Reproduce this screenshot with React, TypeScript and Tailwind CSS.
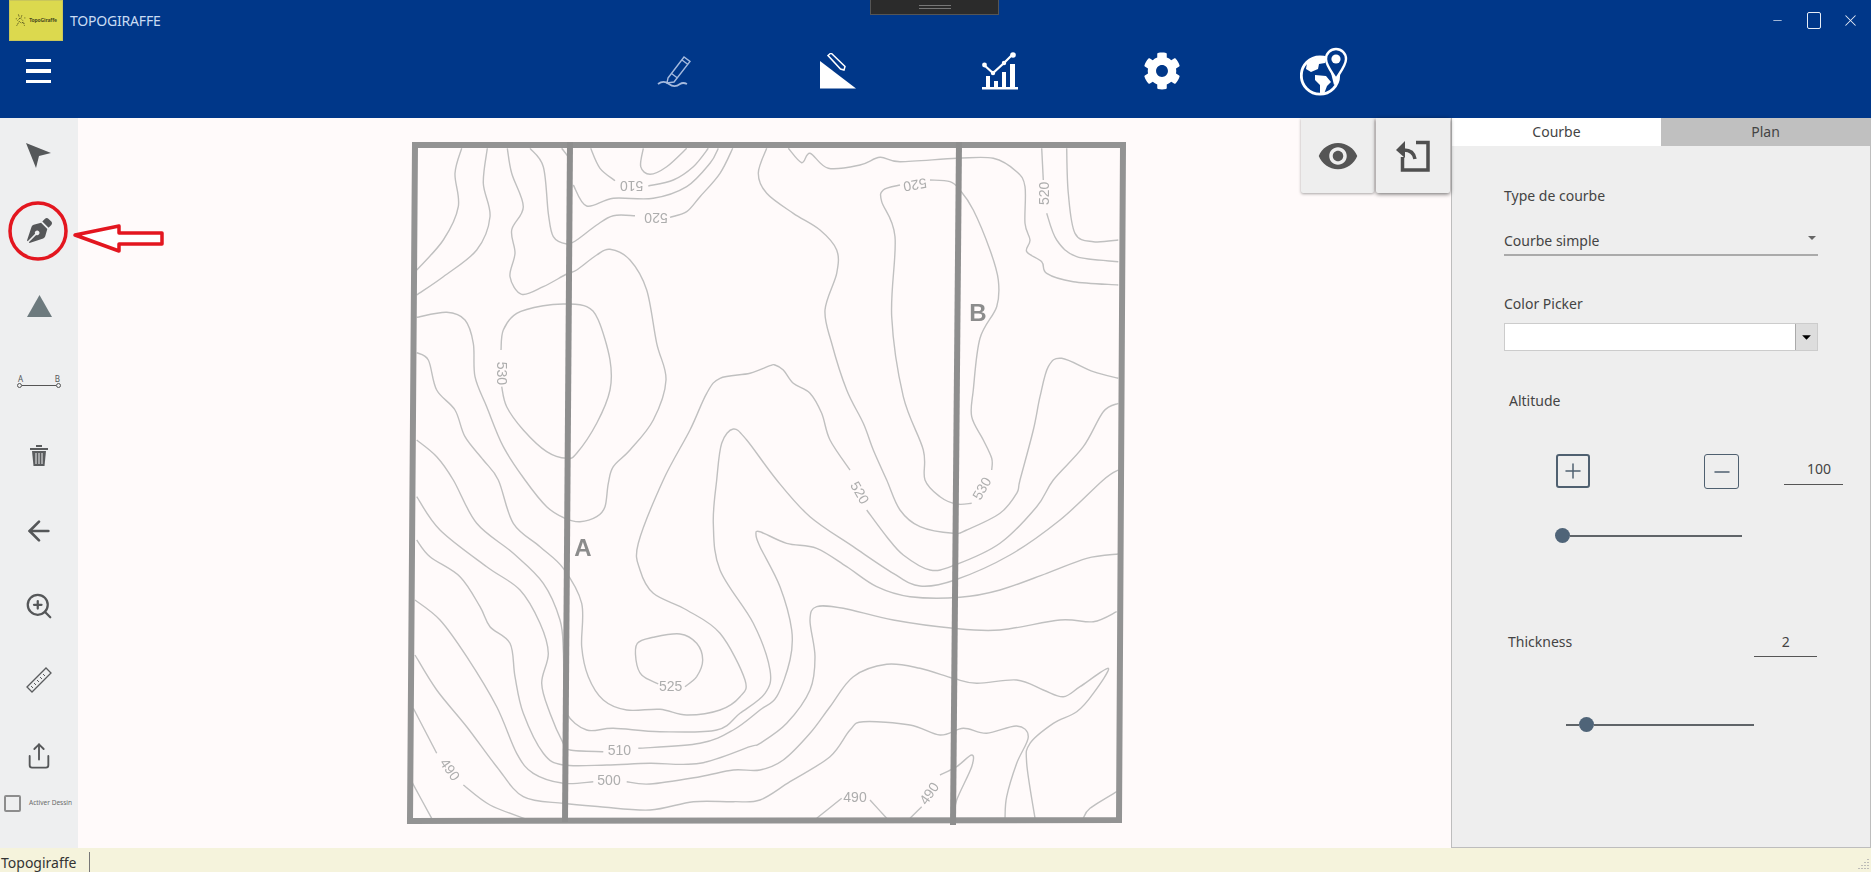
import { ArrowLeft, Minus, Plus, Share, X, ZoomIn } from "lucide-react";
import { FaCog, FaPenNib } from "react-icons/fa";
import { MdArrowDropDown, MdVisibility } from "react-icons/md";

type Pt = [number, number];

// the traced map pieces use four crop origins, all brought back to page pixels here
const crop = (ox: number, oy: number) => (pts: Pt[]) => pts.map(([x, y]): Pt => [ox + x / 3, oy + y / 3]);
const z7 = crop(400, 130);
const z8 = crop(760, 130);
const z9 = crop(400, 480);
const z10 = crop(760, 480);

function smooth(p: Pt[]) {
  let d = `M${p[0][0].toFixed(1)} ${p[0][1].toFixed(1)}`;
  for (let i = 0; i < p.length - 1; i++) {
    const a = p[i - 1] ?? p[i];
    const b = p[i];
    const c = p[i + 1];
    const e = p[i + 2] ?? c;
    d += ` C${(b[0] + (c[0] - a[0]) / 6).toFixed(1)} ${(b[1] + (c[1] - a[1]) / 6).toFixed(1)} ${(c[0] - (e[0] - b[0]) / 6).toFixed(1)} ${(c[1] - (e[1] - b[1]) / 6).toFixed(1)} ${c[0].toFixed(1)} ${c[1].toFixed(1)}`;
  }
  return d;
}

const contours: Pt[][] = [
  z7([[185, 55], [165, 130], [175, 230], [130, 330], [50, 420]]),
  z7([[262, 55], [250, 160], [270, 260], [230, 360], [130, 440], [50, 495]]),
  [
    ...z7([[322, 55], [335, 130], [370, 230], [335, 300], [345, 370], [330, 440], [365, 493], [430, 470], [500, 432], [530, 420], [590, 375], [630, 358], [690, 390], [740, 480], [770, 640], [798, 750], [760, 870], [690, 960], [640, 1010]]),
    ...z9([[625, 10], [615, 80], [590, 110], [540, 125], [495, 115], [440, 80], [375, 0]]),
    ...z7([[310, 950], [260, 830], [225, 740], [220, 640], [195, 570], [140, 547], [50, 562]]),
  ],
  z7([[390, 55], [430, 110], [445, 250], [460, 320], [500, 342], [530, 330], [590, 285], [640, 257], [705, 257]]),
  z7([[810, 262], [860, 245], [900, 200], [960, 130], [998, 55]]),
  z7([[485, 55], [505, 80]]),
  z7([[520, 165], [560, 228], [640, 205], [760, 205], [860, 170], [930, 100], [955, 55]]),
  z7([[572, 55], [600, 115], [645, 152]]),
  z7([[745, 168], [820, 150], [880, 110], [925, 55]]),
  z7([[860, 55], [800, 110], [750, 133], [722, 110], [730, 55]]),
  [
    ...z7([[1100, 55], [1075, 130], [1100, 190]]),
    ...z8([[100, 250], [180, 300], [230, 360], [230, 430], [195, 540], [215, 640], [260, 780], [310, 880], [340, 960]]),
    ...z10([[380, 0], [420, 90], [480, 140], [580, 160], [620, 150], [720, 100], [770, 40], [780, 0]]),
    ...z8([[820, 900], [840, 800], [865, 710], [905, 685], [1000, 725], [1075, 745]]),
  ],
  z7([[303, 660], [310, 600], [350, 550], [430, 527], [500, 522], [560, 530], [595, 570], [630, 690], [630, 780], [590, 880], [530, 970], [500, 985], [440, 965], [370, 900], [320, 830], [305, 770]]),
  [
    ...z7([[50, 668], [85, 690], [110, 780], [165, 840], [195, 920], [250, 990]]),
    ...z9([[295, 0], [340, 130], [420, 200], [490, 265], [545, 370], [545, 500], [565, 590], [610, 660], [680, 690], [780, 688], [860, 705], [960, 690], [1020, 650], [1035, 600], [960, 460], [860, 390], [760, 340], [720, 270], [715, 190], [790, 0]]),
    ...z7([[870, 900], [920, 790], [960, 745], [1050, 730], [1110, 707]]),
    ...z8([[45, 705], [70, 720], [100, 760], [150, 790], [185, 850], [210, 930], [270, 1020]]),
  ],
  [
    ...z10([[320, 90], [380, 170], [430, 225], [510, 270], [585, 255], [720, 190], [830, 80], [880, 0]]),
    ...z8([[970, 950], [1030, 845], [1075, 820]]),
  ],
  [
    ...z7([[50, 930], [110, 980]]),
    ...z9([[160, 0], [230, 130], [340, 220], [430, 310], [480, 420], [490, 510], [492, 620], [500, 700], [560, 750], [640, 745], [780, 755], [950, 750], [1020, 700], [1095, 640], [1110, 570], [1060, 430], [960, 270], [940, 130], [950, 0]]),
    ...z7([[965, 940], [1000, 897], [1040, 930]]),
    ...z10([[50, 0], [150, 110], [280, 200], [400, 280], [480, 318], [585, 300], [750, 225], [900, 120], [1030, 0]]),
    ...z8([[1075, 1020]]),
  ],
  z9([[50, 50], [120, 150], [260, 260], [360, 330], [420, 430], [445, 520], [425, 610], [450, 700], [490, 790], [510, 810], [610, 815]]),
  [
    ...z9([[715, 805], [900, 790], [1000, 750], [1080, 690]]),
    ...z10([[50, 650], [90, 540], [95, 450], [60, 320], [0, 200], [-12, 165], [0, 155], [80, 190], [170, 205], [260, 260], [350, 320], [450, 350], [600, 352], [720, 330], [860, 280], [980, 235], [1075, 222]]),
  ],
  [
    ...z9([[50, 180], [90, 230], [180, 290], [240, 380], [270, 440], [330, 490], [345, 590], [370, 700], [430, 820], [490, 855], [620, 855], [750, 850], [900, 850], [1050, 800]]),
    ...z10([[0, 790], [80, 730], [150, 630], [165, 530], [150, 420], [170, 380], [250, 385], [400, 420], [580, 445], [720, 450], [900, 420], [1000, 425], [1070, 395]]),
  ],
  z9([[45, 360], [120, 420], [200, 530], [290, 680], [350, 820], [400, 880], [490, 910], [580, 905]]),
  [
    ...z9([[680, 905], [750, 912], [900, 890], [1000, 870]]),
    ...z10([[0, 870], [70, 840], [150, 760], [210, 680], [280, 590], [380, 553], [480, 565], [580, 595], [650, 610], [770, 600], [850, 630], [910, 650], [960, 620], [1045, 565], [1000, 640], [950, 695], [880, 730], [810, 790], [800, 850], [825, 1015]]),
  ],
  [
    ...z9([[45, 525], [110, 630], [200, 740], [290, 860], [370, 950], [490, 970], [600, 980], [750, 990], [880, 965], [1000, 965]]),
    ...z10([[0, 960], [90, 905], [210, 830], [270, 750], [310, 725], [450, 735], [540, 765], [610, 745], [680, 760], [770, 738], [805, 770], [770, 850], [740, 950], [735, 1015]]),
  ],
  z9([[40, 685], [110, 820]]),
  z9([[190, 915], [270, 975], [380, 1018]]),
  z9([[35, 905], [95, 1015]]),
  z10([[170, 1015], [245, 955]]),
  z10([[330, 960], [380, 1015]]),
  z10([[450, 1015], [485, 980]]),
  z10([[540, 885], [590, 860], [635, 825], [635, 860], [590, 960], [585, 1000]]),
  z10([[970, 1015], [990, 985], [1070, 935]]),
  z8([[85, 55], [125, 98], [150, 70], [205, 115], [300, 105], [360, 82], [420, 95], [590, 85], [700, 85], [770, 125], [795, 170], [795, 280], [810, 330], [800, 365], [845, 395], [860, 430], [940, 455], [1075, 465]]),
  z8([[510, 150], [570, 155], [600, 180], [640, 240], [690, 360], [715, 450], [710, 530], [660, 625], [640, 780], [635, 860], [670, 930], [695, 985], [695, 1020]]),
  [
    ...z10([[635, 70], [590, 72], [540, 50], [495, 0]]),
    ...z8([[490, 960], [430, 800], [395, 560], [405, 320], [365, 215], [370, 180], [420, 165]]),
  ],
  z8([[845, 55], [850, 150]]),
  z8([[860, 250], [890, 330], [950, 380], [1075, 395]]),
  z8([[920, 55], [925, 190], [945, 310], [1000, 335], [1075, 330]]),
  // small closed loop round the 525 label
  z9([[775, 612], [725, 585], [708, 540], [712, 490], [760, 472], [840, 462], [890, 490], [908, 540], [890, 590], [855, 620]]),
];

const labels: { text: string; at: Pt; rotate: number }[] = [
  { text: "510", at: z7([[695, 167]])[0], rotate: 180 },
  { text: "520", at: z7([[768, 265]])[0], rotate: 180 },
  { text: "530", at: z7([[305, 730]])[0], rotate: 90 },
  { text: "520", at: z8([[465, 165]])[0], rotate: 170 },
  { text: "520", at: z8([[853, 190]])[0], rotate: -90 },
  { text: "525", at: z9([[812, 617]])[0], rotate: 0 },
  { text: "510", at: z9([[658, 810]])[0], rotate: 0 },
  { text: "500", at: z9([[627, 900]])[0], rotate: 0 },
  { text: "490", at: z9([[150, 868]])[0], rotate: 55 },
  { text: "520", at: z10([[300, 38]])[0], rotate: 60 },
  { text: "530", at: z10([[665, 25]])[0], rotate: -60 },
  { text: "490", at: z10([[285, 950]])[0], rotate: 0 },
  { text: "490", at: z10([[507, 940]])[0], rotate: -55 },
];

function TopoMap() {
  return (
    <svg viewBox="78 118 1373 730" className="h-full w-full blur-[0.5px]">
      {contours.map((c, i) => (
        <path key={i} d={smooth(c)} fill="none" stroke="#c0c0c0" strokeWidth={1.4} />
      ))}
      {labels.map((l, i) => (
        <text
          key={i}
          transform={`translate(${l.at[0]} ${l.at[1]}) rotate(${l.rotate})`}
          textAnchor="middle"
          dominantBaseline="central"
          fontSize={14}
          fill="#adadad"
          fontFamily="Liberation Sans, sans-serif"
        >
          {l.text}
        </text>
      ))}
      <polygon points="415,145 1123,145 1119,820 410,821" fill="none" stroke="#939393" strokeWidth={6} />
      <line x1="570" y1="142" x2="565" y2="822" stroke="#8e8e8e" strokeWidth={6} />
      <line x1="959" y1="142" x2="953" y2="825" stroke="#8e8e8e" strokeWidth={6} />
      <text x="583" y="556" textAnchor="middle" fontSize={24} fontWeight={700} fill="#8c8c8c" fontFamily="Liberation Sans, sans-serif">A</text>
      <text x="978" y="321" textAnchor="middle" fontSize={24} fontWeight={700} fill="#8c8c8c" fontFamily="Liberation Sans, sans-serif">B</text>
    </svg>
  );
}

function Slider({ left, right }: { left: number; right: number }) {
  return (
    <div className="flex items-center">
      <div className="h-[2px] bg-[#5f6468]" style={{ width: left }} />
      <div className="h-[15px] w-[15px] rounded-full bg-[#4f6478]" />
      <div className="h-[2px] bg-[#5f6468]" style={{ width: right }} />
    </div>
  );
}

function NavIcon({ children }: { children: React.ReactNode }) {
  return <div className="flex w-[162px] items-center justify-center">{children}</div>;
}

function ToolButton({ children }: { children: React.ReactNode }) {
  return <div className="flex h-[75px] items-center justify-center text-[#555759]">{children}</div>;
}

export default function App() {
  return (
    <div className="relative flex h-screen w-full flex-col overflow-hidden bg-[#fffafa] font-['Noto_Sans',sans-serif] text-[#444]">
      {/* window drag handle */}
      <div className="absolute left-[870px] top-0 flex h-[15px] w-[129px] items-center justify-center border border-t-0 border-[#555] bg-[#2b2b2b]">
        <div className="h-[4px] w-[32px] border-y border-[#777]" />
      </div>

      {/* Title + nav */}
      <header className="h-[118px] shrink-0 bg-[#003789] text-white">
        <div className="flex h-[41px] items-center">
          <div className="ml-[9px] flex h-[41px] w-[54px] items-center justify-center gap-[2px] border border-[#c9c65a] bg-[#dcd94e]">
            <svg viewBox="0 0 14 16" className="h-[15px] w-[12px]">
              <path d="M4 1l1 3M8 2l-1 3M3 8l3-3 3 3M2 14l3-5 2 2 3-1 1 4M1 6h1M11 5h1" fill="none" stroke="#3b3a14" strokeWidth={1} strokeDasharray="1.5 1" />
            </svg>
            <span className="text-[5px] font-bold leading-none tracking-tight text-[#4b4a1c]">TopoGiraffe</span>
          </div>
          <span className="ml-[7px] text-[14px] tracking-[-0.2px] text-[#c9dcf3]">TOPOGIRAFFE</span>
          <div className="ml-auto flex items-center text-[#e7edf6]">
            <Minus size={13} strokeWidth={1.3} />
            <div className="ml-[23px] h-[17px] w-[14px] rounded-[2px] border border-[#e7edf6]" />
            <X size={19} strokeWidth={1.3} className="ml-[20px] mr-[11px]" />
          </div>
        </div>
        <div className="flex h-[60px] items-center">
          <div className="flex w-[595px] flex-col gap-[7px] pl-[26px]">
            <div className="h-[3px] w-[25px] bg-white" />
            <div className="h-[4px] w-[25px] bg-white" />
            <div className="h-[3px] w-[25px] bg-white" />
          </div>
          <NavIcon>
            <svg width="38" height="33" viewBox="0 0 38 33" fill="none" stroke="#a5bade" strokeWidth={1.4}>
              <path d="M11 23L27 2l6 4.5L17 27l-7 1z" />
              <path d="M14.5 18.5l6 4.5M25 5l6 4.5" />
              <path d="M1 29c4-3 7-3 11 0s7 3 11 0c3-2 5-1 7 0" strokeWidth={1.8} />
            </svg>
          </NavIcon>
          <NavIcon>
            <svg width="38" height="36" viewBox="0 0 38 36">
              <path d="M1 8v27.5h36z" fill="#fff" />
              <path d="M9 2.5l3-2.5 14 13.5-1 3.5-3.5-1z" fill="none" stroke="#fff" strokeWidth={1.5} />
            </svg>
          </NavIcon>
          <NavIcon>
            <svg width="36" height="38" viewBox="0 0 36 38" fill="#fff">
              <rect x="4" y="24" width="4" height="12" />
              <rect x="12" y="29" width="4" height="7" />
              <rect x="20" y="20" width="4" height="16" />
              <rect x="28" y="12" width="5" height="24" />
              <rect x="0" y="35" width="36" height="2.5" />
              <path d="M2 13l9 8 11-10 9-9" fill="none" stroke="#fff" strokeWidth={2.2} />
              <circle cx="2.5" cy="13" r="2.4" />
              <circle cx="11" cy="21" r="2.2" />
              <circle cx="22" cy="11" r="2.2" />
              <circle cx="31" cy="3" r="2.8" />
            </svg>
          </NavIcon>
          <NavIcon>
            <FaCog size={38} />
          </NavIcon>
          <NavIcon>
            <svg width="48" height="49" viewBox="0 0 48 49" fill="#fff">
              <circle cx="20" cy="28.5" r="18.7" fill="none" stroke="#fff" strokeWidth={2.8} />
              <path d="M7 16c5-5 13-7 19-5l-1 5-6 1-1 5-7 3-5-3z" />
              <path d="M15 28l11 1 5 6-4 4-3 8-4-1v-8l-5-5z" />
              <path d="M30 21l6 7 2 8-4 2-2-8z" />
              <path d="M36 32C31 24 26 18 26 12a10 10 0 0120 0c0 6-5 12-10 20z" fill="#003789" stroke="#fff" strokeWidth={2.4} />
              <circle cx="36" cy="12" r="4.6" fill="#fff" />
            </svg>
          </NavIcon>
        </div>
      </header>

      {/* Tools, canvas, properties */}
      <main className="flex min-h-0 flex-1">
        <aside className="w-[78px] shrink-0 bg-[#eeeff0]">
          <ToolButton>
            <svg width="26" height="25" viewBox="0 0 26 25">
              <path d="M0 0l25 10-12 3-3 12z" fill="#55585a" />
            </svg>
          </ToolButton>
          <ToolButton>
            <FaPenNib size={25} />
          </ToolButton>
          <ToolButton>
            <svg width="25" height="22" viewBox="0 0 25 22">
              <path d="M12.5 0L25 22H0z" fill="#6d7a7e" />
            </svg>
          </ToolButton>
          <ToolButton>
            <div className="flex w-[44px] flex-col">
              <div className="flex justify-between px-[1px] text-[8px] leading-[9px]">
                <span>A</span>
                <span>B</span>
              </div>
              <div className="flex items-center">
                <div className="h-[5px] w-[5px] rounded-full border border-[#555]" />
                <div className="h-px flex-1 bg-[#555]" />
                <div className="h-[5px] w-[5px] rounded-full border border-[#555]" />
              </div>
            </div>
          </ToolButton>
          <ToolButton>
            <svg width="18" height="21" viewBox="0 0 18 21" fill="#5a5c5e">
              <rect x="0" y="3" width="18" height="2" />
              <rect x="6" y="0" width="6" height="2" />
              <path d="M2 6h14l-1.5 15h-11z" />
              <path d="M6 8v11M9 8v11M12 8v11" stroke="#eeeff0" strokeWidth={1} />
            </svg>
          </ToolButton>
          <ToolButton>
            <ArrowLeft size={32} strokeWidth={2} />
          </ToolButton>
          <ToolButton>
            <ZoomIn size={30} strokeWidth={1.8} />
          </ToolButton>
          <ToolButton>
            <svg width="26" height="27" viewBox="0 0 26 27" fill="none" stroke="#5a5c5e">
              <path d="M1 20L20 1l5 5L6 25z" strokeWidth={1.3} />
              <path d="M5 19l2 2M8 16l2 2M11 13l2 2M14 10l2 2M17 7l2 2" strokeWidth={1} />
            </svg>
          </ToolButton>
          <ToolButton>
            <Share size={28} strokeWidth={1.6} />
          </ToolButton>
          <div className="mt-[2px] flex items-center gap-[8px] pl-[4px]">
            <div className="h-[17px] w-[17px] rounded-[2px] border-2 border-[#8d8d8d]" />
            <span className="whitespace-nowrap text-[6.5px] leading-none text-[#6b6b6b]">Activer Dessin</span>
          </div>
        </aside>

        <section className="relative min-w-0 flex-1">
          <TopoMap />
          {/* floating view buttons */}
          <div className="absolute right-[1px] top-0 flex items-start">
            <div className="flex h-[75px] w-[73px] items-center justify-center rounded-b-[2px] bg-[#eeeeee] text-[#555] shadow-[0_1px_3px_rgba(0,0,0,0.35)]">
              <MdVisibility size={42} />
            </div>
            <div className="ml-[2px] flex h-[75px] w-[74px] items-center justify-center rounded-b-[2px] bg-[#eeeeee] shadow-[0_1px_4px_rgba(0,0,0,0.6)]">
              <svg width="34" height="32" viewBox="0 0 34 32" fill="none" stroke="#4f4f4f" strokeWidth={3.5}>
                <path d="M20 2.5h12v27.5H6.5V17" />
                <path d="M8 10c6 0 10 3 11 9" />
                <path d="M0 10l9-9v17z" fill="#4f4f4f" stroke="none" />
              </svg>
            </div>
          </div>
        </section>

        <aside className="w-[420px] shrink-0 border-x border-b border-[#bdbdbd] bg-[#eeeeee] text-[14px]">
          <div className="flex h-[28px] text-center leading-[28px]">
            <div className="w-[209px] bg-white">Courbe</div>
            <div className="flex-1 bg-[#c0c0c0]">Plan</div>
          </div>
          <div className="pl-[52px]">
            <div className="mt-[40px] leading-[20px]">Type de courbe</div>
            <div className="mt-[25px] flex h-[25px] w-[314px] items-start justify-between border-b-2 border-[#aaaaaa] leading-[20px]">
              <span>Courbe simple</span>
              <div className="mr-[2px] mt-[5px] h-0 w-0 border-x-[4px] border-t-[4px] border-x-transparent border-t-[#666]" />
            </div>
            <div className="mt-[38px] leading-[20px]">Color Picker</div>
            <div className="mt-[9px] flex h-[28px] w-[314px] border border-[#cccccc] bg-white">
              <div className="flex-1" />
              <div className="flex w-[22px] items-center justify-center border-l border-[#aaa] bg-[#dddddd] text-black">
                <MdArrowDropDown size={26} />
              </div>
            </div>
            <div className="ml-[5px] mt-[40px] leading-[20px]">Altitude</div>
            <div className="mt-[43px] flex items-start">
              <div className="ml-[52px] flex h-[34px] w-[34px] items-center justify-center rounded-[3px] border-2 border-[#4f6070] text-[#4f6070]">
                <Plus size={24} strokeWidth={1.5} />
              </div>
              <div className="ml-[114px] flex h-[35px] w-[35px] items-center justify-center rounded-[3px] border border-[#4f6070] text-[#4f6070]">
                <Minus size={24} strokeWidth={1.5} />
              </div>
              <div className="ml-[45px] mt-[5px] h-[26px] w-[59px] border-b border-[#555] pr-[12px] text-right leading-[20px]">100</div>
            </div>
            <div className="ml-[51px] mt-[39px]">
              <Slider left={0} right={172} />
            </div>
            <div className="mt-[89px] flex items-start leading-[20px]">
              <span className="ml-[4px]">Thickness</span>
              <div className="ml-[182px] h-[25px] w-[63px] border-b border-[#555] text-center">2</div>
            </div>
            <div className="ml-[62px] mt-[60px]">
              <Slider left={13} right={160} />
            </div>
          </div>
        </aside>
      </main>

      {/* Status bar */}
      <footer className="flex h-[24px] shrink-0 items-start overflow-hidden bg-[#f5f3dc] pl-[1px] text-[14px] leading-[29px] text-[#333]">
        <span>Topogiraffe</span>
        <div className="ml-[13px] mt-[4px] h-[20px] w-px bg-[#777]" />
        <svg viewBox="0 0 12 12" className="ml-auto mr-[1px] mt-[10px] h-[12px] w-[12px]">
          <path d="M10 1v1M7 4v1M10 4v1M4 7v1M7 7v1M10 7v1M1 10v1M4 10v1M7 10v1M10 10v1" stroke="#aaa" strokeWidth={1.5} />
        </svg>
      </footer>

      {/* Red annotation drawn over the screenshot */}
      <svg className="pointer-events-none absolute left-[8px] top-[201px]" width="158" height="62" viewBox="0 0 158 62">
        <circle cx="30" cy="30" r="28" fill="none" stroke="#e3161f" strokeWidth={3.5} />
        <path d="M67 34L111 25v7h43v11h-43v7z" fill="#fff" stroke="#e3161f" strokeWidth={3.5} strokeLinejoin="round" />
      </svg>
    </div>
  );
}
